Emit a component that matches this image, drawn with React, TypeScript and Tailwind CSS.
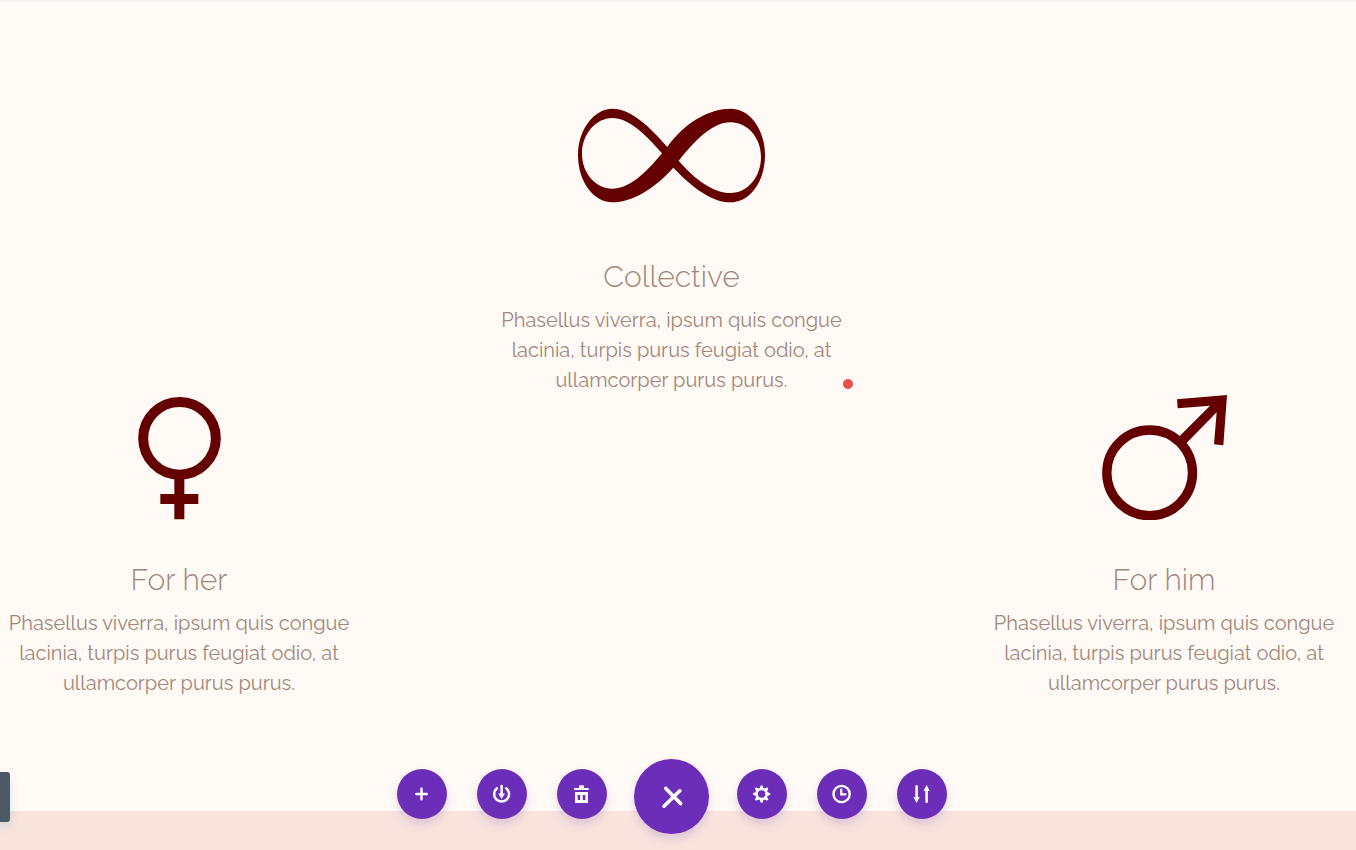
import type { ReactNode } from "react";

const BLURB = "Phasellus viverra, ipsum quis congue lacinia, turpis purus feugiat odio, at ullamcorper purus purus.";

const GEAR_ANGLES = [0, 45, 90, 135, 180, 225, 270, 315];

function InfinityMark() {
  return (
    <svg viewBox="54 11 561 369" className="h-[123px] w-[187px]" fill="#640000" fillRule="evenodd" aria-hidden="true">
      <path
        d="M322 170C268 108 213 55 157 55C102 55 54 118 54 195C54 273 100 336 157 336C217 336 286 293 340 232C395 290 455 336 512 336C570 336 615 273 615 195C615 118 570 55 512 55C452 55 376 92 322 170Z
           M306 189C255 130 205 83 157 83C107 83 66 132 66 190C66 248 107 295 157 295C205 295 252 255 306 189Z
           M356 211C405 152 455 96 512 96C562 96 603 142 603 200C603 260 562 308 512 308C460 308 405 268 356 211Z"
      />
    </svg>
  );
}

function VenusMark() {
  return (
    <svg viewBox="54 30 249 375" className="h-[125px] w-[83px]" fill="#640000" aria-hidden="true">
      <circle cx="178.5" cy="160" r="109" fill="none" stroke="#640000" strokeWidth="30" />
      <path d="M163 278h30v49h42v30h-42v46h-30v-46h-42v-30h42z" />
    </svg>
  );
}

function MarsMark() {
  return (
    <svg viewBox="36 30 375 375" className="size-[125px]" fill="#640000" aria-hidden="true">
      <circle cx="179" cy="263.5" r="128.5" fill="none" stroke="#640000" strokeWidth="28" />
      <path d="M411 30L400 181L372 178L380 82L286 178L264 158L360 62L263 70L261 43Z" />
    </svg>
  );
}

function Offer({ title, className = "", icon, children }: { title: string; className?: string; icon: ReactNode; children?: ReactNode }) {
  return (
    <article className={`relative flex w-[358px] flex-col items-center text-center ${className}`}>
      {icon}
      <h2 className="mt-[42px] text-[30px] leading-9 font-light">{title}</h2>
      <p className="mt-2.5 text-xl leading-[30px]">{BLURB}</p>
      {children}
    </article>
  );
}

function RoundButton({ label, children }: { label: string; children: ReactNode }) {
  return (
    <button
      type="button"
      aria-label={label}
      className="mt-2.5 flex size-[50px] items-center justify-center rounded-full bg-[#6c2eb9] text-white shadow-[0_5px_10px_rgba(108,46,185,0.18)]"
    >
      <svg viewBox="0 0 20 20" className="size-5" fill="currentColor">
        {children}
      </svg>
    </button>
  );
}

export default function App() {
  return (
    <div className="flex min-h-screen flex-col bg-[#fffaf5] font-['Raleway','Lato',sans-serif] text-[#a0877b]">
      <div className="h-0.5 bg-[#f6f1ee]" />

      <main className="flex items-start justify-between pt-[92px] pr-[13px] pb-[113px]">
        <Offer title="For her" className="mt-[301px]" icon={<VenusMark />} />
        <Offer title="Collective" icon={<InfinityMark />}>
          <span className="absolute right-[-2px] bottom-1.5 size-2.5 rounded-full bg-[#e8504a]" />
        </Offer>
        <Offer title="For him" className="mt-[301px]" icon={<MarsMark />} />
      </main>

      <section className="grow bg-[#f9e4dd]" />

      {/* Side tab */}
      <button
        type="button"
        aria-label="Open panel"
        className="fixed bottom-7 left-0 h-[50px] w-2.5 rounded-r-[3px] bg-[#4c5866] shadow-[0_5px_10px_rgba(43,135,218,0.2)]"
      />

      {/* Page settings bar */}
      <div className="fixed inset-x-0 bottom-4 flex items-start justify-center gap-[30px] pr-3">
        <RoundButton label="Add from library">
          <path d="M9.5 4.8v10.4M4.3 10h10.4" fill="none" stroke="currentColor" strokeWidth="2.4" strokeLinecap="round" />
        </RoundButton>
        <RoundButton label="Save to library">
          <path d="M5 4.2A7.5 7.5 0 1 0 14.2 4.2M9.6 2v9" fill="none" stroke="currentColor" strokeWidth="2.5" strokeLinecap="round" />
          <path d="M6.2 9.5h6.8L9.6 15z" />
        </RoundButton>
        <RoundButton label="Clear layout">
          <path d="M7 2.2q0-1 1-1h3q1 0 1 1V4h4q1 0 1 1t-1 1h-13q-1 0-1-1t1-1h4z" />
          <path fillRule="evenodd" d="M3 8h13v11h-13zM5.7 11v5h2.5v-5zM10.8 11v5h2.5v-5z" />
        </RoundButton>
        <button
          type="button"
          aria-label="Close settings bar"
          className="-mr-0.5 -ml-[3px] flex size-[75px] items-center justify-center rounded-full bg-[#6c2eb9] text-white shadow-[0_5px_10px_rgba(108,46,185,0.18)]"
        >
          <svg viewBox="0 0 24 24" className="size-6" fill="none" stroke="currentColor" strokeWidth="3.6" strokeLinecap="round">
            <path d="M5.8 3.4L20.6 18.6M19.8 5.8L4 21.2" />
          </svg>
        </button>
        <RoundButton label="Page settings">
          <circle cx="9.6" cy="10" r="5" fill="none" stroke="currentColor" strokeWidth="2.5" />
          {GEAR_ANGLES.map((angle) => (
            <path key={angle} d="M7.5 5L8.6 1.7Q9.6 .7 10.6 1.7L11.7 5z" transform={`rotate(${angle} 9.6 10)`} />
          ))}
        </RoundButton>
        <RoundButton label="Editing history">
          <circle cx="9.6" cy="10" r="8.1" fill="none" stroke="currentColor" strokeWidth="2.4" />
          <path d="M9.2 5.6v4.8h4.2" fill="none" stroke="currentColor" strokeWidth="2.2" strokeLinecap="round" />
        </RoundButton>
        <RoundButton label="Portability">
          <path d="M4.6 2.2v12M14.6 17.8v-12" fill="none" stroke="currentColor" strokeWidth="2.5" strokeLinecap="round" />
          <path d="M1.5 13h6.2L4.6 19zM11.5 7h6.2L14.6 1z" />
        </RoundButton>
      </div>
    </div>
  );
}
